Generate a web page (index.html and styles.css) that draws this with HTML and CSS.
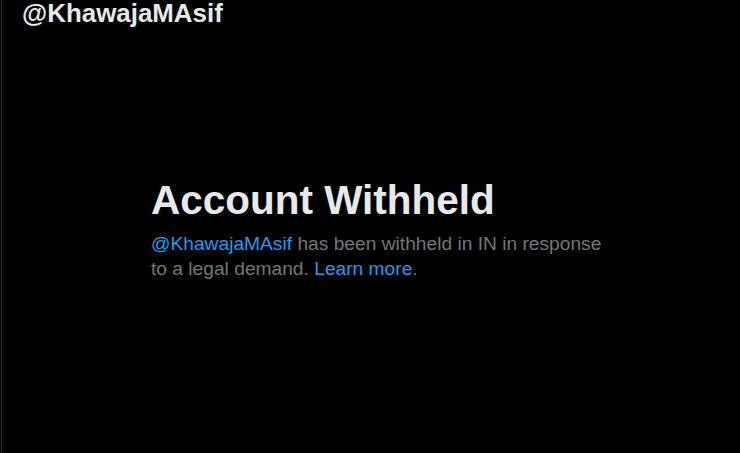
FILE: index.html
```html
<!DOCTYPE html>
<html lang="en">
<head>
<meta charset="utf-8">
<title>Account Withheld</title>
<link rel="stylesheet" href="styles.css">
</head>
<body>
<div class="column">
  <header class="topbar">
    <h2 class="handle">@KhawajaMAsif</h2>
  </header>
  <section class="empty">
    <div class="empty-inner">
      <h1 class="title">Account Withheld</h1>
      <p class="desc"><a class="link" href="#">@KhawajaMAsif</a> has been withheld in IN in response to a legal demand. <a class="link" href="#">Learn more</a>.</p>
    </div>
  </section>
</div>
</body>
</html>
```

FILE: styles.css
```css
html, body {
  margin: 0;
  padding: 0;
  background: #000;
  height: 100%;
  overflow: hidden;
}
body {
  font-family: "Liberation Sans", Arial, sans-serif;
  color: #e7e9ea;
}
.column {
  margin-left: 1px;
  border-left: 1px solid #2f3336;
  height: 100%;
  display: flex;
  flex-direction: column;
}
.topbar {
  padding: 0 0 0 20px;
  height: 36px;
  display: flex;
  align-items: center;
}
.handle {
  margin: 0;
  font-size: 25.9px;
  font-weight: 700;
  line-height: 30px;
  color: #e7e9ea;
  position: relative;
  top: -5px;
}
.empty {
  padding-top: 142px;
  padding-left: 149px;
}
.empty-inner {
  width: 470px;
}
.title {
  margin: 0;
  font-size: 40.5px;
  font-weight: 700;
  line-height: 45px;
  color: #e7e9ea;
}
.desc {
  margin: 8px 0 0;
  font-size: 19.2px;
  line-height: 25px;
  color: #71767b;
}
.link {
  color: #1d9bf0;
  text-decoration: none;
}
```
